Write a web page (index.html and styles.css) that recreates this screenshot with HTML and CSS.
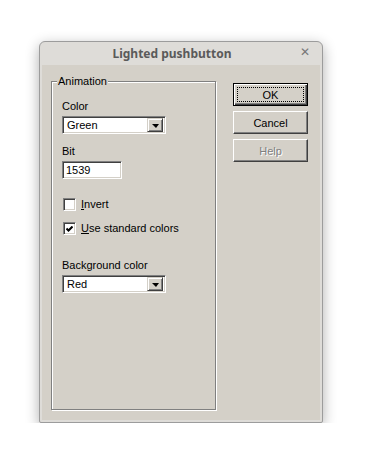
FILE: index.html
```html
<!DOCTYPE html>
<html lang="en">
<head>
    <meta charset="UTF-8">
    <title>Lighted pushbutton</title>
    <link rel="stylesheet" href="styles.css">
</head>
<body>
    <div class="window">
        <div class="titlebar">
            <span class="title">Lighted pushbutton</span>
            <span class="close">&#x2715;</span>
        </div>
        <div class="content">
            <div class="group">
                <span class="group-label">Animation</span>

                <div class="field-label">Color</div>
                <div class="combo">
                    <span class="combo-value">Green</span>
                    <span class="combo-btn"><span class="arrow"></span></span>
                </div>

                <div class="field-label label-bit">Bit</div>
                <div class="edit">1539</div>

                <label class="check first">
                    <span class="box"></span>
                    <span><u>I</u>nvert</span>
                </label>
                <label class="check">
                    <span class="box">
                        <svg width="7" height="7" viewBox="0 0 7 7"><polyline points="0.5,2.5 2.5,4.5 6.5,0.5" fill="none" stroke="#000" stroke-width="2"/></svg>
                    </span>
                    <span><u>U</u>se standard colors</span>
                </label>

                <div class="field-label label-bg">Background color</div>
                <div class="combo">
                    <span class="combo-value">Red</span>
                    <span class="combo-btn"><span class="arrow"></span></span>
                </div>
            </div>

            <div class="buttons">
                <button class="btn default"><span class="focus">OK</span></button>
                <button class="btn">Cancel</button>
                <button class="btn disabled">Help</button>
            </div>
        </div>
    </div>
</body>
</html>
```

FILE: styles.css
```css
:root {
    --face: #d4d0c8;
    --frame: #dedcd8;
    --shadow: #808080;
    --dark: #404040;
    --light: #ffffff;
}

* {
    box-sizing: border-box;
    margin: 0;
    padding: 0;
}

body {
    background: #ffffff;
    padding: 41px 0 0 39px;
    font-family: 'Liberation Sans', Arial, sans-serif;
    font-size: 11px;
    line-height: 13px;
    color: #000;
}

.window {
    width: 284px;
    height: 382px;
    border: 1px solid #9c9c9c;
    border-radius: 6px 6px 2px 2px;
    background: var(--frame);
    padding: 0 2px 2px 2px;
    display: flex;
    flex-direction: column;
    box-shadow: 0 4px 14px rgba(0, 0, 0, 0.32);
}

.titlebar {
    height: 23px;
    position: relative;
    display: flex;
    align-items: center;
    justify-content: center;
    padding-right: 18px;
    border-radius: 5px 5px 0 0;
}

.title {
    font-family: 'Noto Sans', 'DejaVu Sans', sans-serif;
    font-weight: 700;
    font-size: 12px;
    color: #5a5a5a;
}

.close {
    position: absolute;
    right: 10px;
    top: 4px;
    font-family: 'DejaVu Sans', sans-serif;
    font-weight: 700;
    font-size: 12px;
    color: #777;
}

.content {
    flex: 1;
    background: var(--face);
    display: flex;
    padding: 16px 0 0 9px;
}

/* etched group box */
.group {
    position: relative;
    width: 165px;
    height: 329px;
    border: 1px solid var(--shadow);
    box-shadow: 1px 1px 0 var(--light), inset 1px 1px 0 var(--light);
    padding: 18px 0 0 10px;
    display: flex;
    flex-direction: column;
    align-items: flex-start;
}

.group-label {
    position: absolute;
    left: 5px;
    top: -7px;
    background: var(--face);
    padding: 0 1px;
}

.field-label {
    margin-bottom: 3px;
}

.label-bit {
    margin-top: 11px;
}

.label-bg {
    margin-top: 24px;
    margin-bottom: 3px;
}

.combo,
.edit {
    height: 18px;
    background: #fff;
    border: 1px solid;
    border-color: var(--shadow) var(--light) var(--light) var(--shadow);
    box-shadow: inset 1px 1px 0 var(--dark), inset -1px -1px 0 var(--face);
}

.combo {
    width: 104px;
    display: flex;
    align-items: center;
    padding: 2px 2px 2px 4px;
}

.combo-value {
    flex: 1;
}

.combo-btn {
    width: 16px;
    height: 14px;
    background: var(--face);
    border: 1px solid;
    border-color: var(--face) var(--dark) var(--dark) var(--face);
    box-shadow: inset 1px 1px 0 var(--light), inset -1px -1px 0 var(--shadow);
    display: flex;
    align-items: center;
    justify-content: center;
}

.arrow {
    width: 0;
    height: 0;
    border-left: 4px solid transparent;
    border-right: 3px solid transparent;
    border-top: 4px solid #000;
    margin-top: 1px;
}

.edit {
    width: 60px;
    padding: 2px 3px;
}

.check {
    display: flex;
    align-items: center;
    gap: 5px;
    margin-left: 1px;
    margin-top: 11px;
}

.check.first {
    margin-top: 19px;
}

.check u {
    text-decoration: underline;
    text-underline-offset: 1px;
}

.box {
    width: 13px;
    height: 13px;
    background: #fff;
    border: 1px solid;
    border-color: var(--shadow) var(--light) var(--light) var(--shadow);
    box-shadow: inset 1px 1px 0 var(--dark), inset -1px -1px 0 var(--face);
    display: flex;
    align-items: center;
    justify-content: center;
}

.box svg {
    display: block;
    margin-top: 1px;
}

.buttons {
    margin: 2px 0 0 17px;
    display: flex;
    flex-direction: column;
    gap: 5px;
}

.btn {
    width: 75px;
    height: 23px;
    font-family: 'Liberation Sans', Arial, sans-serif;
    font-size: 11px;
    color: #000;
    background: var(--face);
    border: 1px solid;
    border-color: var(--light) var(--dark) var(--dark) var(--light);
    box-shadow: inset -1px -1px 0 var(--shadow);
    display: flex;
    align-items: center;
    justify-content: center;
}

.btn.default {
    border: 1px solid #000;
    box-shadow: inset 1px 1px 0 var(--light), inset -1px -1px 0 var(--dark), inset -2px -2px 0 var(--shadow);
    padding: 3px;
}

.focus {
    flex: 1;
    align-self: stretch;
    display: flex;
    align-items: center;
    justify-content: center;
    border: 1px dotted #000;
}

.btn.disabled {
    color: var(--shadow);
    text-shadow: 1px 1px 0 var(--light);
}
```
